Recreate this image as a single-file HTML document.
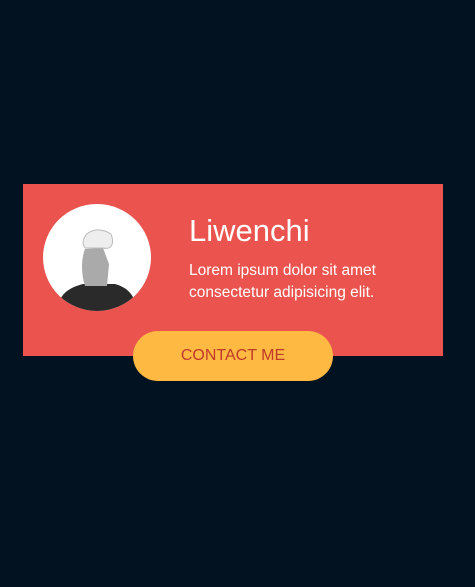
<!DOCTYPE html><html><head><style>
body{margin:0;width:475px;height:587px;background:#031220;position:relative;font-family:"Liberation Sans",sans-serif;overflow:hidden}
.card{position:absolute;left:23px;top:184px;width:420px;height:172px;background:#eb544e}
.av{position:absolute;left:43px;top:204px;width:108px;height:107px;border-radius:50%;background:#fff;overflow:hidden}
h1{position:absolute;left:189px;top:213px;margin:0;font-weight:normal;font-size:31px;color:#fff}
p{position:absolute;left:189px;top:260px;margin:0;font-size:15.5px;line-height:22px;color:#fff;width:210px;letter-spacing:0}
.btn{position:absolute;left:133px;top:331px;width:200px;height:50px;border-radius:25px;background:#fdb942;color:#c0392b;font-size:16px;text-align:center;line-height:50px}
</style></head><body>
<div class="card"></div>
<div class="av"><svg width="108" height="107">
<path d="M14 107 C16 90 25 84 40 80 L72 80 C86 84 92 92 94 107Z" fill="#2a2a2a"/>
<path d="M42 82 C38 70 38 55 42 45 L60 44 L66 60 L64 82Z" fill="#aaa"/>
<path d="M40 40 C40 26 56 22 68 30 C72 40 68 46 60 44 L42 44Z" fill="#eee" stroke="#bbb" stroke-width="1"/>
</svg></div>
<h1>Liwenchi</h1>
<p>Lorem ipsum dolor sit amet consectetur adipisicing elit.</p>
<div class="btn">CONTACT ME</div>
</body></html>
